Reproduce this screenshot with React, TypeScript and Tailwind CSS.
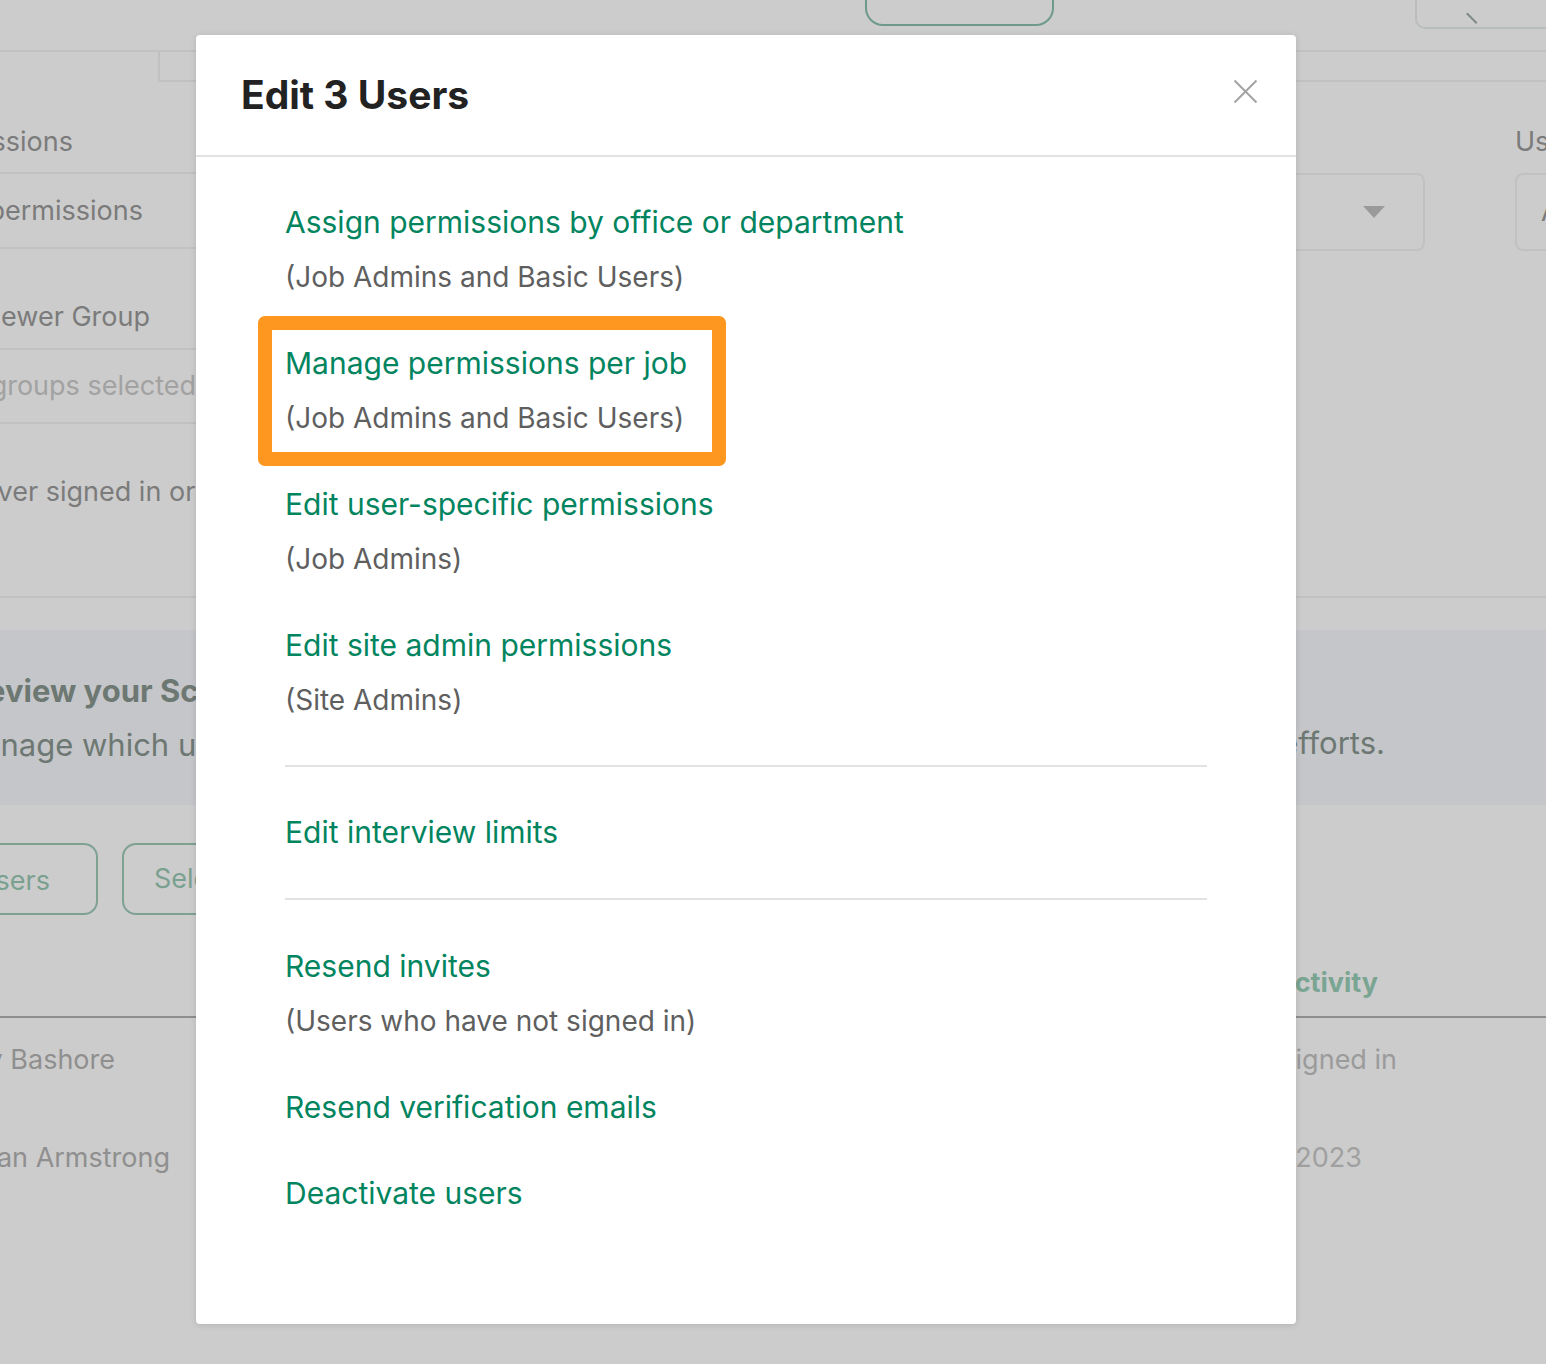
const sections = [
  [
    { label: 'Assign permissions by office or department', note: '(Job Admins and Basic Users)' },
    { label: 'Manage permissions per job', note: '(Job Admins and Basic Users)', highlight: true },
    { label: 'Edit user-specific permissions', note: '(Job Admins)' },
    { label: 'Edit site admin permissions', note: '(Site Admins)' },
  ],
  [{ label: 'Edit interview limits' }],
  [
    { label: 'Resend invites', note: '(Users who have not signed in)' },
    { label: 'Resend verification emails' },
    { label: 'Deactivate users' },
  ],
];

function BackgroundPage() {
  return (
    <div className="text-[27px] leading-[36px] text-[#7b7b7b]">
      {/* top nav, buttons run off the top edge */}
      <div className="flex h-[52px] items-start border-b-2 border-[#c1c1c1]">
        <div className="ml-[865px] h-[26px] w-[211px] rounded-b-[18px] border-2 border-t-0 border-[#6f9a8a]" />
        <div className="ml-[361px] flex h-[29px] w-[140px] items-end rounded-bl-[10px] border-2 border-t-0 border-r-0 border-[#b9bdbc] pl-[52px] pb-[6px]">
          <div className="h-[14px] w-[14px] rotate-45 border-b-2 border-[#7f8a86]" />
        </div>
      </div>

      {/* tabs */}
      <div className="flex h-[30px]">
        <div className="w-[160px] border-r-2 border-[#c1c1c1]" />
        <div className="flex-1 border-b-2 border-[#c1c1c1]" />
      </div>

      {/* filters */}
      <div className="flex h-[516px] border-b-2 border-[#c1c1c1] pt-[42px]">
        <div className="w-[196px] shrink-0 overflow-hidden">
          <div className="flex w-[73px] justify-end">
            <span className="whitespace-nowrap">Permissions</span>
          </div>
          <div className="mt-[12px] flex h-[77px] items-center border-y-2 border-[#c1c1c1]">
            <div className="flex w-[143px] justify-end">
              <span className="whitespace-nowrap">All permissions</span>
            </div>
          </div>
          <div className="mt-[50px] flex w-[150px] justify-end">
            <span className="whitespace-nowrap">Interviewer Group</span>
          </div>
          <div className="mt-[13px] flex h-[76px] items-center border-y-2 border-[#c1c1c1]">
            <div className="flex w-[196px] justify-end">
              <span className="whitespace-nowrap text-[#a2a2a2]">No groups selected</span>
            </div>
          </div>
          <div className="mt-[50px] -ml-[38px] whitespace-nowrap">Never signed in or</div>
        </div>
        <div className="ml-[929px] mt-[49px] flex h-[78px] w-[300px] shrink-0 items-center justify-end rounded-[8px] border-2 border-[#c1c1c1] pr-[38px]">
          <svg width="22" height="12" viewBox="0 0 22 12">
            <path d="M0 0h22L11 12z" fill="#9a9a9a" />
          </svg>
        </div>
        <div className="ml-[90px] w-[200px] shrink-0">
          <div className="whitespace-nowrap">User type</div>
          <div className="mt-[13px] flex h-[78px] items-center rounded-[8px] border-2 border-[#c1c1c1] pl-[24px]">
            <span className="whitespace-nowrap">All</span>
          </div>
        </div>
      </div>

      {/* banner */}
      <div className="mt-[32px] flex h-[175px] bg-[#c5c6c9] text-[#6d7873]">
        <div className="flex w-[196px] flex-col justify-center overflow-hidden">
          <div className="-ml-[33px] whitespace-nowrap text-[31px] font-bold leading-[40px]">Review your Sch</div>
          <div className="mt-[14px] -ml-[45px] whitespace-nowrap text-[31px] leading-[40px]">Manage which us</div>
        </div>
        <div className="ml-auto flex w-[250px] items-end justify-end overflow-hidden pb-[42px] pr-[161px] text-[31px] leading-[40px]">
          <span className="whitespace-nowrap">efforts.</span>
        </div>
      </div>

      {/* buttons */}
      <div className="mt-[38px] flex">
        <div className="-ml-[102px] flex h-[72px] w-[200px] items-center justify-end rounded-[14px] border-2 border-[#7ea192] pr-[46px] pt-[4px] text-[#7aa090]">
          <span className="whitespace-nowrap">Invite Users</span>
        </div>
        <div className="ml-[24px] flex h-[72px] w-[200px] items-center rounded-[14px] border-2 border-[#7ea192] pl-[30px] text-[#7aa090]">
          <span className="whitespace-nowrap">Select</span>
        </div>
      </div>

      {/* table */}
      <div className="mt-[50px] flex border-b-2 border-[#8e8e8e] pb-[15px]">
        <div className="ml-auto flex w-[250px] justify-end overflow-hidden pr-[168px]">
          <span className="whitespace-nowrap font-bold text-[#7aa592]">Last Activity</span>
        </div>
      </div>
      <div className="flex h-[84px] items-center text-[#8f8f8f]">
        <div className="flex w-[115px] justify-end">
          <span className="whitespace-nowrap">Ashley Bashore</span>
        </div>
        <div className="ml-auto flex w-[250px] justify-end overflow-hidden pr-[149px] text-[#9b9b9b]">
          <span className="whitespace-nowrap">Never signed in</span>
        </div>
      </div>
      <div className="flex h-[112px] items-center text-[#8f8f8f]">
        <div className="flex w-[170px] justify-end">
          <span className="whitespace-nowrap">Megan Armstrong</span>
        </div>
        <div className="ml-auto flex w-[250px] justify-end overflow-hidden pr-[184px] text-[#a0a0a0]">
          <span className="whitespace-nowrap">Jan 12, 2023</span>
        </div>
      </div>
    </div>
  );
}

function EditUsersModal() {
  return (
    <div className="absolute left-[196px] top-[35px] h-[1289px] w-[1100px] rounded-[4px] bg-white shadow-[0_1px_6px_rgba(0,0,0,0.12)]">
      <div className="flex h-[122px] items-center justify-between border-b-2 border-[#e2e2e2] pl-[45px] pr-[38px]">
        <h2 className="text-[39px] font-bold leading-[48px] text-[#222222]">Edit 3 Users</h2>
        <button className="-mt-[8px]">
          <svg width="25" height="25" viewBox="0 0 25 25" fill="none" stroke="#a3a3a3" strokeWidth="2">
            <path d="M1.5 1.5l22 22M23.5 1.5l-22 22" />
          </svg>
        </button>
      </div>

      <div className="px-[89px] pt-[47px]">
        {sections.map((items, i) => (
          <div
            key={i}
            className={
              i === 0
                ? 'flex flex-col gap-[50px] pb-[47px]'
                : i === 1
                  ? 'flex flex-col gap-[50px] border-t-2 border-[#e2e2e2] pt-[47px] pb-[48px]'
                  : 'flex flex-col gap-[50px] border-t-2 border-[#e2e2e2] pt-[48px]'
            }
          >
            {items.map((item) => (
              <div key={item.label} className="relative">
                {'highlight' in item && item.highlight && (
                  <div className="pointer-events-none absolute -left-[27px] -top-[29px] h-[150px] w-[468px] rounded-[7px] border-[14px] border-[#fd971f]" />
                )}
                <a className="block text-[30px] leading-[36px] text-[#02855f]">{item.label}</a>
                {item.note && <p className="mt-[19px] text-[28px] leading-[36px] text-[#5f5f5f]">{item.note}</p>}
              </div>
            ))}
          </div>
        ))}
      </div>
    </div>
  );
}

export default function App() {
  return (
    <div className="relative h-[1364px] w-full overflow-hidden bg-[#cccccc] font-['Inter',sans-serif]">
      <BackgroundPage />
      <EditUsersModal />
    </div>
  );
}
